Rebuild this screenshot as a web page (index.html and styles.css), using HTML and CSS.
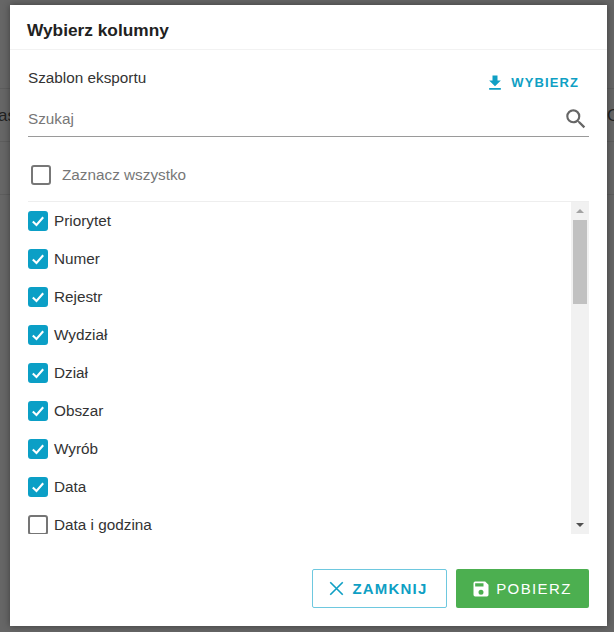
FILE: index.html
```html
<!DOCTYPE html>
<html lang="pl">
<head>
<meta charset="utf-8">
<title>Wybierz kolumny</title>
<link rel="stylesheet" href="styles.css">
</head>
<body>
<div class="backdrop">
  <span class="peek peek-left">as</span>
  <span class="peek peek-right">O</span>
  <span class="rule rule-a"></span>
  <span class="rule rule-b"></span>
  <span class="rule rule-c"></span>
  <section class="dialog">
    <header class="dialog-title">Wybierz kolumny</header>
    <div class="dialog-body">
      <div class="template-row">
        <span class="template-label">Szablon eksportu</span>
        <span class="link-btn">
          <svg class="icon-dl" viewBox="0 0 24 24"><path d="M19 9h-4V3H9v6H5l7 7 7-7zM5 18v2h14v-2H5z"/></svg>
          WYBIERZ
        </span>
      </div>
      <div class="search">
        <span class="search-text">Szukaj</span>
        <svg class="icon-search" viewBox="0 0 24 24"><path d="M15.5 14h-.79l-.28-.27A6.47 6.47 0 0 0 16 9.5 6.5 6.5 0 1 0 9.5 16c1.61 0 3.09-.59 4.23-1.57l.27.28v.79l5 4.99L20.49 19l-4.99-5zm-6 0C7.01 14 5 11.99 5 9.5S7.01 5 9.5 5 14 7.01 14 9.5 11.99 14 9.5 14z"/></svg>
      </div>
      <div class="select-all">
        <span class="box box-muted"></span>
        <span class="select-all-label">Zaznacz wszystko</span>
      </div>
      <div class="list-wrap">
        <ul class="list">
          <li class="item"><span class="box box-on"><svg viewBox="0 0 20 20"><path d="M3.5 10.5l4.6 4.4 8.4-9.6"/></svg></span><span class="item-text">Priorytet</span></li>
          <li class="item"><span class="box box-on"><svg viewBox="0 0 20 20"><path d="M3.5 10.5l4.6 4.4 8.4-9.6"/></svg></span><span class="item-text">Numer</span></li>
          <li class="item"><span class="box box-on"><svg viewBox="0 0 20 20"><path d="M3.5 10.5l4.6 4.4 8.4-9.6"/></svg></span><span class="item-text">Rejestr</span></li>
          <li class="item"><span class="box box-on"><svg viewBox="0 0 20 20"><path d="M3.5 10.5l4.6 4.4 8.4-9.6"/></svg></span><span class="item-text">Wydział</span></li>
          <li class="item"><span class="box box-on"><svg viewBox="0 0 20 20"><path d="M3.5 10.5l4.6 4.4 8.4-9.6"/></svg></span><span class="item-text">Dział</span></li>
          <li class="item"><span class="box box-on"><svg viewBox="0 0 20 20"><path d="M3.5 10.5l4.6 4.4 8.4-9.6"/></svg></span><span class="item-text">Obszar</span></li>
          <li class="item"><span class="box box-on"><svg viewBox="0 0 20 20"><path d="M3.5 10.5l4.6 4.4 8.4-9.6"/></svg></span><span class="item-text">Wyrób</span></li>
          <li class="item"><span class="box box-on"><svg viewBox="0 0 20 20"><path d="M3.5 10.5l4.6 4.4 8.4-9.6"/></svg></span><span class="item-text">Data</span></li>
          <li class="item"><span class="box"></span><span class="item-text">Data i godzina</span></li>
        </ul>
        <div class="scrollbar">
          <span class="arrow arrow-up"></span>
          <span class="thumb"></span>
          <span class="arrow arrow-down"></span>
        </div>
      </div>
      <div class="actions">
        <span class="btn btn-outline">
          <svg class="icon-x" viewBox="0 0 12 12"><path d="M1 1l10 10M11 1L1 11"/></svg>
          ZAMKNIJ
        </span>
        <span class="btn btn-green">
          <svg class="icon-save" viewBox="0 0 24 24"><path d="M17 3H5a2 2 0 0 0-2 2v14a2 2 0 0 0 2 2h14a2 2 0 0 0 2-2V7l-4-4zm-5 16a3 3 0 1 1 0-6 3 3 0 0 1 0 6zm3-10H5V5h10v4z"/></svg>
          POBIERZ
        </span>
      </div>
    </div>
  </section>
</div>
</body>
</html>
```
FILE: styles.css
```css
* { box-sizing: border-box; }
html, body { margin: 0; height: 100%; }
body { font-family: "Liberation Sans", Arial, sans-serif; background: #666; overflow: hidden; }
.backdrop { position: relative; width: 614px; height: 632px; padding: 5px 7px 6px 10px; background: #666; overflow: hidden; }
.peek { position: absolute; top: 106px; font-size: 17px; line-height: 20px; color: #222; }
.peek-left { left: -2px; }
.peek-right { left: 607px; }
.rule { position: absolute; left: 0; width: 614px; height: 1px; background: #5d5d5d; }
.rule-a { top: 88px; }
.rule-b { top: 141px; }
.rule-c { top: 194px; }
.dialog { position: relative; height: 621px; background: #fff; box-shadow: 0 0 7px rgba(0,0,0,.4); display: flex; flex-direction: column; }
.dialog-title { height: 45px; padding: 15px 17px 0; font: 700 17.3px/20px "Liberation Sans", Arial, sans-serif; color: #212121; border-bottom: 1px solid #f2f2f2; }
.dialog-body { flex: 1; padding: 0 18px 18px; display: flex; flex-direction: column; }
.template-row { display: flex; justify-content: space-between; align-items: center; height: 54px; padding-right: 10px; }
.template-label { font: 15.3px/18px "Liberation Sans", Arial, sans-serif; color: #333; margin-top: 1px; }
.link-btn { display: flex; align-items: center; gap: 6px; margin-top: 12px; font: 700 13px/16px "Liberation Sans", Arial, sans-serif; letter-spacing: 1.1px; color: #0f9fc4; }
.icon-dl { width: 20px; height: 20px; fill: #0f9fc4; }
.search { display: flex; justify-content: space-between; align-items: center; height: 33px; border-bottom: 1px solid #9a9a9a; }
.search-text { font: 15.3px/18px "Liberation Sans", Arial, sans-serif; color: #777; margin-top: -2px; }
.icon-search { width: 26px; height: 26px; fill: #666; margin-top: -3px; }
.select-all { display: flex; align-items: center; height: 65px; padding: 11px 0 0 3px; border-bottom: 1px solid #eee; }
.select-all-label { margin-left: 11px; font: 15.3px/18px "Liberation Sans", Arial, sans-serif; color: #777; }
.box { flex: none; display: block; width: 20px; height: 20px; border: 2px solid #757575; border-radius: 3px; background: #fff; }
.box-muted { border-color: #777; }
.box-on { background: #0b9fc6; border-color: #0b9fc6; }
.box svg { display: block; width: 16px; height: 16px; fill: none; stroke: #fff; stroke-width: 2.6; }
.list-wrap { display: flex; height: 332px; }
.list { flex: 1; margin: 0; padding: 0; list-style: none; overflow: hidden; }
.item { display: flex; align-items: center; gap: 6px; height: 38px; color: #333; }
.item-text { font: 15.3px/18px "Liberation Sans", Arial, sans-serif; }
.scrollbar { width: 18px; background: #f1f1f1; display: flex; flex-direction: column; align-items: center; }
.thumb { width: 14px; height: 84px; background: #c1c1c1; margin-top: 1px; }
.arrow { display: block; width: 0; height: 0; border-left: 4px solid transparent; border-right: 4px solid transparent; }
.arrow-up { border-bottom: 4px solid #a3a3a3; margin-top: 7px; margin-bottom: 6px; }
.arrow-down { border-top: 4px solid #505050; margin-top: auto; margin-bottom: 7px; }
.actions { display: flex; justify-content: flex-end; gap: 9px; margin-top: auto; }
.btn { display: flex; align-items: center; justify-content: center; height: 39px; border-radius: 2px; font: 700 15px/16px "Liberation Sans", Arial, sans-serif; letter-spacing: 1.2px; }
.btn-outline { width: 135px; border: 1px solid #6ec8df; color: #0f9fc4; gap: 8px; padding-right: 2px; }
.btn-green { width: 133px; background: #4caf50; color: #fff; font-weight: 400; letter-spacing: 1.4px; gap: 5px; padding-right: 2px; }
.icon-x { width: 15px; height: 15px; fill: none; stroke: #0f9fc4; stroke-width: 1.3; }
.icon-save { width: 20px; height: 20px; fill: #fff; }
```
